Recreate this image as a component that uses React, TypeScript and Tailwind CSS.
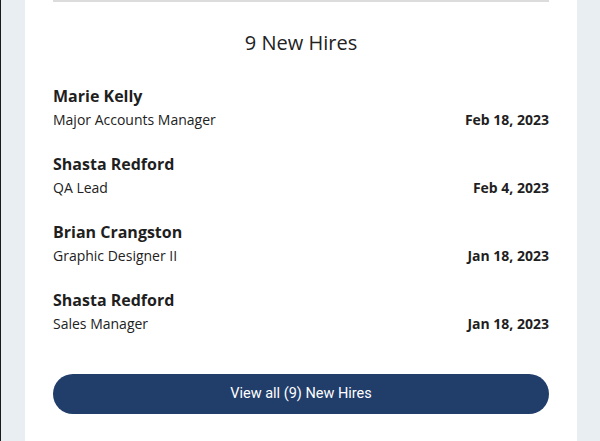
import React from "react";

const hires = [
  { name: "Marie Kelly", title: "Major Accounts Manager", date: "Feb 18, 2023" },
  { name: "Shasta Redford", title: "QA Lead", date: "Feb 4, 2023" },
  { name: "Brian Crangston", title: "Graphic Designer II", date: "Jan 18, 2023" },
  { name: "Shasta Redford", title: "Sales Manager", date: "Jan 18, 2023" },
];

export default function App() {
  return (
    <div className="flex h-[441px] w-[600px] bg-[#e9eef3] border-l border-[#1a1a1a]" style={{ fontFamily: "'Open Sans', sans-serif" }}>
      <div className="w-[24px] shrink-0" />
      <div className="flex-1 bg-white px-[28px]">
        <div className="h-[2px] bg-[#dcdcdc]" />
        <h2 className="mt-[27px] text-center text-[20px] leading-[28px] text-[#222]">9 New Hires</h2>
        <div className="mt-[27px] flex flex-col gap-[22px]">
          {hires.map((h, i) => (
            <div key={i}>
              <div className="text-[16px] leading-[24px] font-bold text-[#1f1f1f]">{h.name}</div>
              <div className="mt-[2px] flex items-center justify-between leading-[20px]">
                <span className="text-[14px] text-[#222]">{h.title}</span>
                <span className="text-[14px] font-bold text-[#1f1f1f]">{h.date}</span>
              </div>
            </div>
          ))}
        </div>
        <button
          className="mt-[40px] flex h-[40px] w-full items-center justify-center rounded-full bg-[#213d6a] text-[14.5px] text-white"
          style={{ fontFamily: "Roboto, sans-serif" }}
        >
          View all (9) New Hires
        </button>
      </div>
      <div className="w-[23px] shrink-0" />
    </div>
  );
}
